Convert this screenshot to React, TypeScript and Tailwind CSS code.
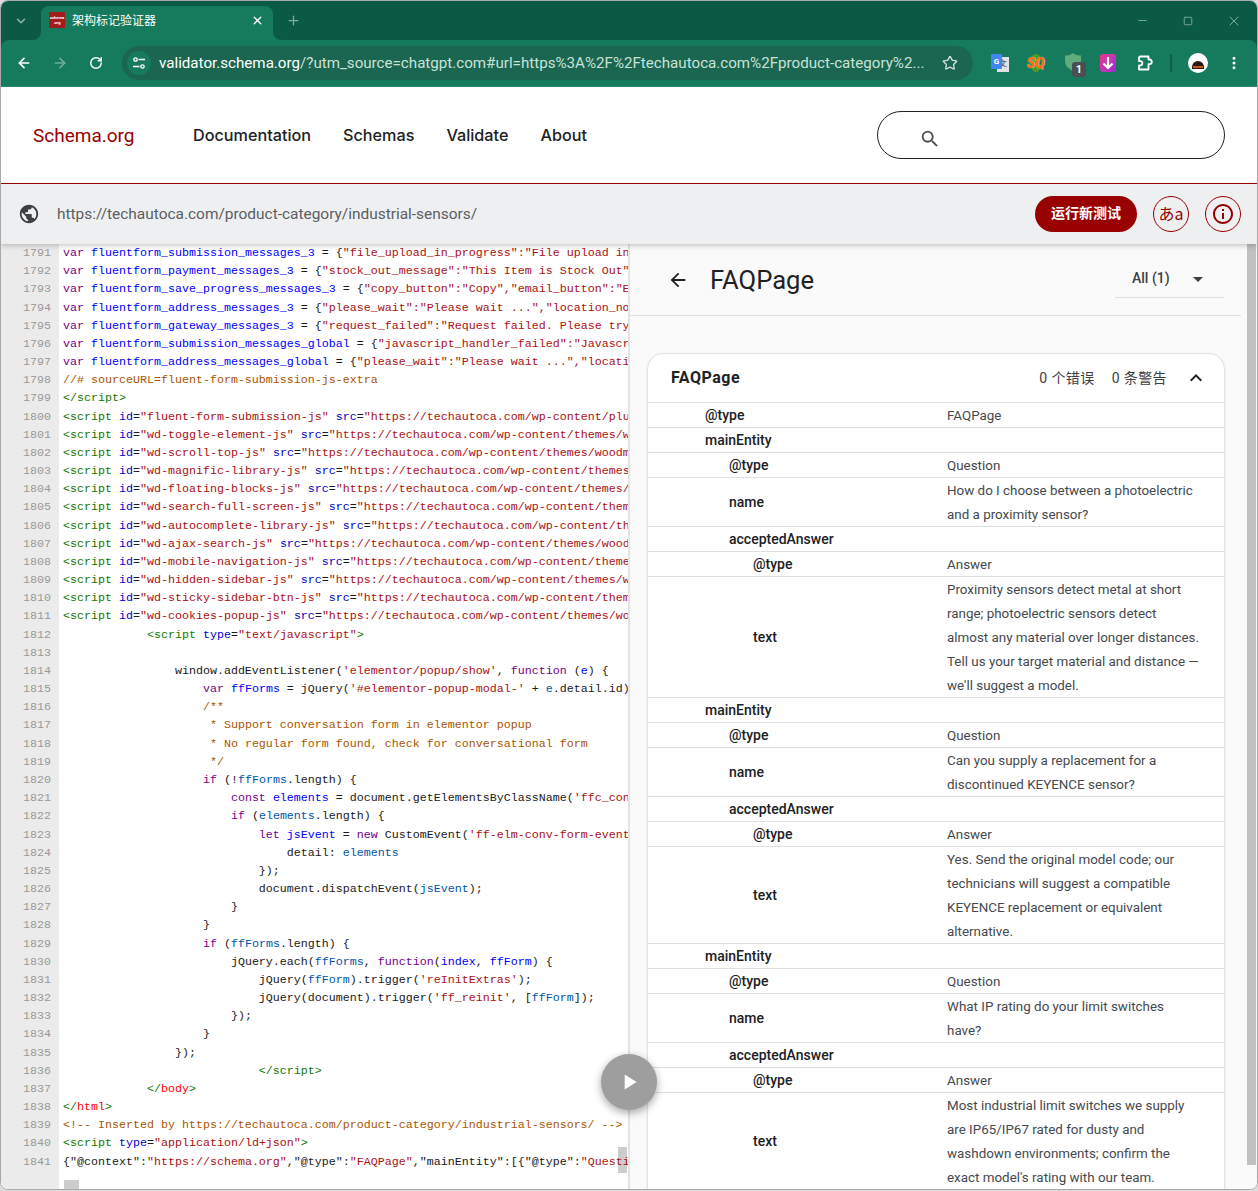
import { ChevronDown, Minus, Plus, RotateCw, Square, Star, X, ArrowLeft, ArrowRight, EllipsisVertical } from 'lucide-react';
import { MdArrowBack, MdArrowDropDown, MdInfoOutline, MdKeyboardArrowUp, MdPlayArrow, MdPublic, MdSearch } from 'react-icons/md';

type Tok = [keyof typeof tone, string];

const tone = {
  n: 'text-[#1a1a1a]',
  kw: 'text-[#770088]',
  def: 'text-[#0000ff]',
  v2: 'text-[#0055aa]',
  str: 'text-[#aa1111]',
  com: 'text-[#aa5500]',
  tag: 'text-[#117700]',
  attr: 'text-[#0000cc]',
  red: 'text-[#ff0000]',
};

const sp = (n: number): Tok => ['n', ' '.repeat(n)];
const scriptLine = (id: string, src: string): Tok[] => [
  ['tag', '<script'],
  ['n', ' '],
  ['attr', 'id'],
  ['n', '='],
  ['str', `"${id}"`],
  ['n', ' '],
  ['attr', 'src'],
  ['n', '='],
  ['str', `"https://techautoca.com/wp-content/${src}`],
];
const varLine = (name: string, rest: string): Tok[] => [
  ['kw', 'var'],
  ['n', ' '],
  ['def', name],
  ['n', ' = {'],
  ['str', rest],
];

const code: Tok[][] = [
  varLine('fluentform_submission_messages_3', '"file_upload_in_progress":"File upload in progress"'),
  varLine('fluentform_payment_messages_3', '"stock_out_message":"This Item is Stock Out"'),
  varLine('fluentform_save_progress_messages_3', '"copy_button":"Copy","email_button":"Email"'),
  varLine('fluentform_address_messages_3', '"please_wait":"Please wait ...","location_not"'),
  varLine('fluentform_gateway_messages_3', '"request_failed":"Request failed. Please try"'),
  varLine('fluentform_submission_messages_global', '"javascript_handler_failed":"Javascript"'),
  varLine('fluentform_address_messages_global', '"please_wait":"Please wait ...","location"'),
  [['com', '//# sourceURL=fluent-form-submission-js-extra']],
  [['tag', '</script>']],
  scriptLine('fluent-form-submission-js', 'plugins/fluentform'),
  scriptLine('wd-toggle-element-js', 'themes/woodmart'),
  scriptLine('wd-scroll-top-js', 'themes/woodmart'),
  scriptLine('wd-magnific-library-js', 'themes/woodmart'),
  scriptLine('wd-floating-blocks-js', 'themes/woodmart'),
  scriptLine('wd-search-full-screen-js', 'themes/woodmart'),
  scriptLine('wd-autocomplete-library-js', 'themes/woodmart'),
  scriptLine('wd-ajax-search-js', 'themes/woodmart'),
  scriptLine('wd-mobile-navigation-js', 'themes/woodmart'),
  scriptLine('wd-hidden-sidebar-js', 'themes/woodmart'),
  scriptLine('wd-sticky-sidebar-btn-js', 'themes/woodmart'),
  scriptLine('wd-cookies-popup-js', 'themes/woodmart'),
  [sp(12), ['tag', '<script'], ['n', ' '], ['attr', 'type'], ['n', '='], ['str', '"text/javascript"'], ['tag', '>']],
  [],
  [sp(16), ['n', 'window.addEventListener('], ['str', "'elementor/popup/show'"], ['n', ', '], ['kw', 'function'], ['n', ' ('], ['def', 'e'], ['n', ') {']],
  [sp(20), ['kw', 'var'], ['n', ' '], ['def', 'ffForms'], ['n', ' = jQuery('], ['str', "'#elementor-popup-modal-'"], ['n', ' + '], ['v2', 'e'], ['n', '.detail.id);']],
  [sp(20), ['com', '/**']],
  [sp(21), ['com', '* Support conversation form in elementor popup']],
  [sp(21), ['com', '* No regular form found, check for conversational form']],
  [sp(21), ['com', '*/']],
  [sp(20), ['kw', 'if'], ['n', ' (!'], ['v2', 'ffForms'], ['n', '.length) {']],
  [sp(24), ['kw', 'const'], ['n', ' '], ['def', 'elements'], ['n', ' = document.getElementsByClassName('], ['str', "'ffc_conv_form'"]],
  [sp(24), ['kw', 'if'], ['n', ' ('], ['v2', 'elements'], ['n', '.length) {']],
  [sp(28), ['kw', 'let'], ['n', ' '], ['def', 'jsEvent'], ['n', ' = '], ['kw', 'new'], ['n', ' CustomEvent('], ['str', "'ff-elm-conv-form-event'"]],
  [sp(32), ['n', 'detail: '], ['v2', 'elements']],
  [sp(28), ['n', '});']],
  [sp(28), ['n', 'document.dispatchEvent('], ['v2', 'jsEvent'], ['n', ');']],
  [sp(24), ['n', '}']],
  [sp(20), ['n', '}']],
  [sp(20), ['kw', 'if'], ['n', ' ('], ['v2', 'ffForms'], ['n', '.length) {']],
  [sp(24), ['n', 'jQuery.each('], ['v2', 'ffForms'], ['n', ', '], ['kw', 'function'], ['n', '('], ['def', 'index'], ['n', ', '], ['def', 'ffForm'], ['n', ') {']],
  [sp(28), ['n', 'jQuery('], ['v2', 'ffForm'], ['n', ').trigger('], ['str', "'reInitExtras'"], ['n', ');']],
  [sp(28), ['n', 'jQuery(document).trigger('], ['str', "'ff_reinit'"], ['n', ', ['], ['v2', 'ffForm'], ['n', ']);']],
  [sp(24), ['n', '});']],
  [sp(20), ['n', '}']],
  [sp(16), ['n', '});']],
  [sp(28), ['tag', '</script>']],
  [sp(12), ['tag', '</'], ['red', 'body'], ['tag', '>']],
  [['tag', '</'], ['red', 'html'], ['tag', '>']],
  [['com', '<!-- Inserted by https://techautoca.com/product-category/industrial-sensors/ -->']],
  [['tag', '<script'], ['n', ' '], ['attr', 'type'], ['n', '='], ['str', '"application/ld+json"'], ['tag', '>']],
  [['n', '{"@context":'], ['str', '"https://schema.org"'], ['n', ',"@type":'], ['str', '"FAQPage"'], ['n', ',"mainEntity":[{"@type":'], ['str', '"Question"']],
];

const indent = { 1: 'pl-[57px]', 2: 'pl-[81px]', 3: 'pl-[105px]' };

interface Row {
  k: string;
  level: 1 | 2 | 3;
  v?: string[];
}

const rows: Row[] = [
  { k: '@type', level: 1, v: ['FAQPage'] },
  { k: 'mainEntity', level: 1 },
  { k: '@type', level: 2, v: ['Question'] },
  { k: 'name', level: 2, v: ['How do I choose between a photoelectric', 'and a proximity sensor?'] },
  { k: 'acceptedAnswer', level: 2 },
  { k: '@type', level: 3, v: ['Answer'] },
  {
    k: 'text',
    level: 3,
    v: [
      'Proximity sensors detect metal at short',
      'range; photoelectric sensors detect',
      'almost any material over longer distances.',
      'Tell us your target material and distance —',
      "we'll suggest a model.",
    ],
  },
  { k: 'mainEntity', level: 1 },
  { k: '@type', level: 2, v: ['Question'] },
  { k: 'name', level: 2, v: ['Can you supply a replacement for a', 'discontinued KEYENCE sensor?'] },
  { k: 'acceptedAnswer', level: 2 },
  { k: '@type', level: 3, v: ['Answer'] },
  {
    k: 'text',
    level: 3,
    v: [
      'Yes. Send the original model code; our',
      'technicians will suggest a compatible',
      'KEYENCE replacement or equivalent',
      'alternative.',
    ],
  },
  { k: 'mainEntity', level: 1 },
  { k: '@type', level: 2, v: ['Question'] },
  { k: 'name', level: 2, v: ['What IP rating do your limit switches', 'have?'] },
  { k: 'acceptedAnswer', level: 2 },
  { k: '@type', level: 3, v: ['Answer'] },
  {
    k: 'text',
    level: 3,
    v: [
      'Most industrial limit switches we supply',
      'are IP65/IP67 rated for dusty and',
      'washdown environments; confirm the',
      "exact model's rating with our team.",
    ],
  },
];

function BrowserChrome() {
  return (
    <div className="bg-[#0b5a45] font-['Roboto',sans-serif]">
      <div className="flex h-[39px] items-end">
        <div className="flex h-[39px] w-[40px] items-center justify-center text-[#8fb5a8]">
          <ChevronDown size={14} strokeWidth={2.5} />
        </div>
        <div className="relative flex h-[34px] w-[232px] items-center rounded-t-lg bg-[#167a5c] pb-[6px] pl-[8px] pr-[9px]">
          <span className="absolute bottom-0 left-[-8px] h-2 w-2 bg-[#167a5c]">
            <span className="block h-2 w-2 rounded-br-lg bg-[#0b5a45]" />
          </span>
          <span className="absolute bottom-0 right-[-8px] h-2 w-2 bg-[#167a5c]">
            <span className="block h-2 w-2 rounded-bl-lg bg-[#0b5a45]" />
          </span>
          <div className="flex h-[16px] w-[16px] flex-col items-center justify-center bg-[#a31c1c] text-[4px] font-bold leading-[5px] text-white">
            <span>schema</span>
            <span>.org</span>
          </div>
          <span className="ml-[7px] flex-1 font-['Noto_Sans_CJK_SC',sans-serif] text-[12px] text-white">架构标记验证器</span>
          <X size={13} strokeWidth={2.5} className="text-white" />
        </div>
        <div className="flex h-[39px] w-[40px] items-center justify-center text-[#7fae9e]">
          <Plus size={15} strokeWidth={2} />
        </div>
        <div className="flex-1" />
        <div className="flex h-[39px] items-center text-[#86b0a2]">
          <div className="flex w-[46px] justify-center">
            <Minus size={13} strokeWidth={1.6} />
          </div>
          <div className="flex w-[46px] justify-center">
            <Square size={10} strokeWidth={2} />
          </div>
          <div className="flex w-[46px] justify-center">
            <X size={16} strokeWidth={1.4} />
          </div>
        </div>
      </div>
      <div className="flex h-[47px] items-center rounded-t-lg border-b border-[#2a8a6e] bg-[#167a5c]">
        <div className="flex w-[121px] items-center text-white">
          <ArrowLeft size={16} strokeWidth={2.5} className="ml-[15px]" />
          <ArrowRight size={16} strokeWidth={2.5} className="ml-[20px] text-[#6fae98]" />
          <RotateCw size={14} strokeWidth={2.5} className="ml-[21px]" />
        </div>
        <div className="flex h-[34px] w-[851px] items-center rounded-full bg-[#1a6650] pl-[5px] pr-[15px]">
          <div className="flex h-[24px] w-[24px] items-center justify-center rounded-full bg-[#167a5c]">
            <svg width="14" height="14" viewBox="0 0 14 14" fill="none" stroke="white" strokeWidth="1.3">
              <circle cx="3.5" cy="3.5" r="1.7" />
              <path d="M6.5 3.5H13M1 10.5H7.5" />
              <circle cx="10.5" cy="10.5" r="1.7" />
            </svg>
          </div>
          <div className="ml-[8px] flex-1 whitespace-nowrap text-[15.15px] text-[#c9e2d8]">
            <span className="text-white">validator.schema.org</span>
            /?utm_source=chatgpt.com#url=https%3A%2F%2Ftechautoca.com%2Fproduct-category%2...
          </div>
          <Star size={16} strokeWidth={2} className="text-[#cfe3db]" />
        </div>
        <div className="flex flex-1 items-center pl-[18px]">
          <div className="relative h-[18px] w-[18px]">
            <span className="absolute right-0 top-[3px] h-[15px] w-[12px] bg-[#dfe3e6] text-center text-[8px] font-bold leading-[14px] text-[#5f6368]">文</span>
            <span className="absolute left-0 top-0 h-[15px] w-[11px] rounded-[1px] bg-[#4285f4] text-center text-[8px] font-bold leading-[15px] text-white">G</span>
          </div>
          <div className="relative ml-[17px] flex h-[18px] w-[20px] items-center justify-center">
            <span className="absolute left-[6px] top-0 h-[18px] w-[8px] rounded-full bg-[#4c9a2a]" />
            <span className="relative text-[14px] font-black italic leading-none text-[#ff6a00] [text-shadow:0_0_1px_white]">SQ</span>
          </div>
          <div className="relative ml-[18px] h-[20px] w-[18px]">
            <svg width="16" height="18" viewBox="0 0 16 18" className="absolute left-[1px] top-0">
              <path d="M8 0 C10 2 13 2.5 16 2.5 V8 C16 13 12 16 8 18 C4 16 0 13 0 8 V2.5 C3 2.5 6 2 8 0 Z" fill="#63ab7c" />
            </svg>
            <span className="absolute left-[8px] top-[9px] h-[15px] w-[14px] rounded-[3px] bg-[#4a4f52] text-center text-[11px] font-bold leading-[15px] text-white">1</span>
          </div>
          <div className="ml-[18px] flex h-[18px] w-[16px] items-center justify-center rounded-[3px] bg-gradient-to-br from-[#ef2f88] to-[#9a22d8]">
            <svg width="12" height="13" viewBox="0 0 12 13" fill="none" stroke="white" strokeWidth="2.2">
              <path d="M6 0V11M1.5 6.5L6 11L10.5 6.5" />
            </svg>
          </div>
          <svg width="18" height="18" viewBox="0 0 18 18" fill="none" stroke="white" strokeWidth="1.8" strokeLinejoin="round" className="ml-[20px]">
            <path d="M4 2.5H12.5V5.5H13.5A2.3 2.3 0 0 1 13.5 10.1H12.5V15.5H3V11.5H4.2A2 2 0 0 0 4.2 7.2H3V3.5Z" />
          </svg>
          <span className="ml-[16px] h-[18px] w-[2px] bg-[#0e5f48]" />
          <div className="relative ml-[16px] h-[20px] w-[20px] overflow-hidden rounded-full bg-white">
            <span className="absolute left-[4px] top-[8px] h-[8px] w-[12px] rounded-t-full bg-[#2a1a12]" />
            <span className="absolute left-[5px] top-[13px] h-[2px] w-[10px] bg-[#c2591f]" />
          </div>
          <EllipsisVertical size={16} strokeWidth={2.5} className="ml-[18px] text-white" />
        </div>
      </div>
    </div>
  );
}

function SiteHeader() {
  return (
    <header className="flex h-[97px] items-center border-b border-[#990000] bg-white pl-[32px] pr-[32px] font-['Roboto',sans-serif]">
      <span className="w-[160px] pt-[2px] text-[19px] text-[#990000]">Schema.org</span>
      <nav className="flex gap-[32px] font-['Inter',sans-serif] text-[16.2px] font-medium text-[#202124]">
        <span>Documentation</span>
        <span>Schemas</span>
        <span>Validate</span>
        <span>About</span>
      </nav>
      <div className="ml-auto flex h-[48px] w-[348px] items-center rounded-full border border-[#202124] pl-[41px]">
        <MdSearch size={22} className="mt-[8px] text-[#505050]" />
      </div>
    </header>
  );
}

function TestBar() {
  return (
    <div className="relative z-10 flex h-[60px] items-center bg-[#eeeff1] pl-[17px] pr-[16px] font-['Roboto',sans-serif] shadow-[0_2px_5px_rgba(0,0,0,0.2)]">
      <MdPublic size={22} className="text-[#3c4043]" />
      <span className="ml-[17px] pt-[1px] text-[15.45px] text-[#5a5e63]">https://techautoca.com/product-category/industrial-sensors/</span>
      <button className="ml-auto h-[36px] w-[102px] rounded-full bg-[#990000] pb-[3px] font-['Noto_Sans_CJK_SC',sans-serif] text-[14px] font-bold text-white">
        运行新测试
      </button>
      <button className="ml-[16px] h-[36px] w-[36px] rounded-full border border-[#990000] pb-[3px] font-['Noto_Sans_CJK_JP',sans-serif] text-[16px] leading-none text-[#990000]">
        あa
      </button>
      <button className="ml-[16px] flex h-[36px] w-[36px] items-center justify-center rounded-full border border-[#990000] text-[#990000]">
        <MdInfoOutline size={24} />
      </button>
    </div>
  );
}

function CodePane() {
  return (
    <div className="relative flex w-[629px] shrink-0 overflow-hidden border-r-2 border-[#e4e4e4] bg-white font-['Liberation_Mono',monospace] text-[11.67px]">
      <div className="w-[58px] shrink-0 bg-[#ebebeb] pr-[8px] text-right text-[#999999]">
        {code.map((_, i) => (
          <div key={i} className="h-[18.18px] leading-[18px]">
            {1791 + i}
          </div>
        ))}
      </div>
      <div className="absolute right-[1px] top-[903px] h-[26px] w-[9px] bg-[#cccccc]" />
      <div className="absolute bottom-0 left-[63px] h-[9px] w-[15px] bg-[#cccccc]" />
      <div className="relative min-w-0 flex-1 overflow-hidden pl-[4px]">
        {code.map((line, i) => (
          <div key={i} className="h-[18.18px] whitespace-pre leading-[18px]">
            {line.map(([t, s], j) => (
              <span key={j} className={tone[t]}>
                {s}
              </span>
            ))}
          </div>
        ))}
      </div>
    </div>
  );
}

function ResultPane() {
  return (
    <div className="flex min-w-0 flex-1 bg-[#fafafa] font-['Roboto',sans-serif]">
      <div className="w-[617px] shrink-0">
        <div className="mr-[6px] flex h-[72px] items-start border-b border-[#e0e0e0]">
          <MdArrowBack size={22} className="ml-[37px] mt-[25px] text-[#202124]" />
          <span className="ml-[21px] mt-[21px] text-[25.6px] leading-[30px] text-[#202124]">FAQPage</span>
          <div className="ml-auto mr-[17px] mt-[15px] flex h-[39px] w-[109px] items-center border-b border-[#e0e0e0] pl-[17px] pt-[1px] text-[14px] font-medium text-[#3c4043]">
            All (1)
            <MdArrowDropDown size={24} className="ml-[16px] text-[#3c4043]" />
          </div>
        </div>
        <div className="ml-[17px] mt-[37px] w-[578px] rounded-t-[16px] border border-[#e3e3e3] bg-white shadow-[0_1px_3px_rgba(0,0,0,0.08)]">
          <div className="flex h-[49px] items-center border-b border-[#e0e0e0] pl-[23px] pr-[16px]">
            <span className="text-[16px] font-bold tracking-[0.5px] text-[#202124]">FAQPage</span>
            <span className="ml-auto font-['Roboto','Noto_Sans_CJK_SC',sans-serif] text-[14px] tracking-[0.4px] text-[#3c4043]">0 个错误</span>
            <span className="ml-[17px] font-['Roboto','Noto_Sans_CJK_SC',sans-serif] text-[14px] tracking-[0.4px] text-[#3c4043]">0 条警告</span>
            <MdKeyboardArrowUp size={24} className="ml-[17px] text-[#202124]" />
          </div>
          {rows.map((r, i) => (
            <div key={i} className="flex items-center border-b border-[#e0e0e0] text-[13.4px] leading-[24px]">
              <div className={`w-[299px] shrink-0 text-[14px] font-medium text-[#202124] ${indent[r.level]}`}>{r.k}</div>
              <div className="relative top-[1px] min-h-[24px] whitespace-nowrap text-[#45494e]">
                {r.v?.map((l, j) => (
                  <div key={j}>{l}</div>
                ))}
              </div>
            </div>
          ))}
        </div>
      </div>
      <div className="flex-1">
        <div className="h-[921px] w-[9px] bg-[#c0c0c0]" />
      </div>
    </div>
  );
}

export default function App() {
  return (
    <div className="h-[1191px] w-[1258px] overflow-hidden bg-[#dcdcdc]">
      <div className="flex h-[1190px] flex-col overflow-hidden rounded-lg border border-[#a8a8a8] bg-white">
        <BrowserChrome />
        <SiteHeader />
        <TestBar />
        <div className="relative isolate flex min-h-0 flex-1 overflow-hidden">
          <CodePane />
          <ResultPane />
          <div className="absolute left-[600px] top-[810px] flex h-[56px] w-[56px] items-center justify-center rounded-full bg-[#9e9e9e] shadow-[0_3px_8px_rgba(0,0,0,0.35)]">
            <MdPlayArrow size={26} className="text-white" />
          </div>
        </div>
      </div>
    </div>
  );
}
